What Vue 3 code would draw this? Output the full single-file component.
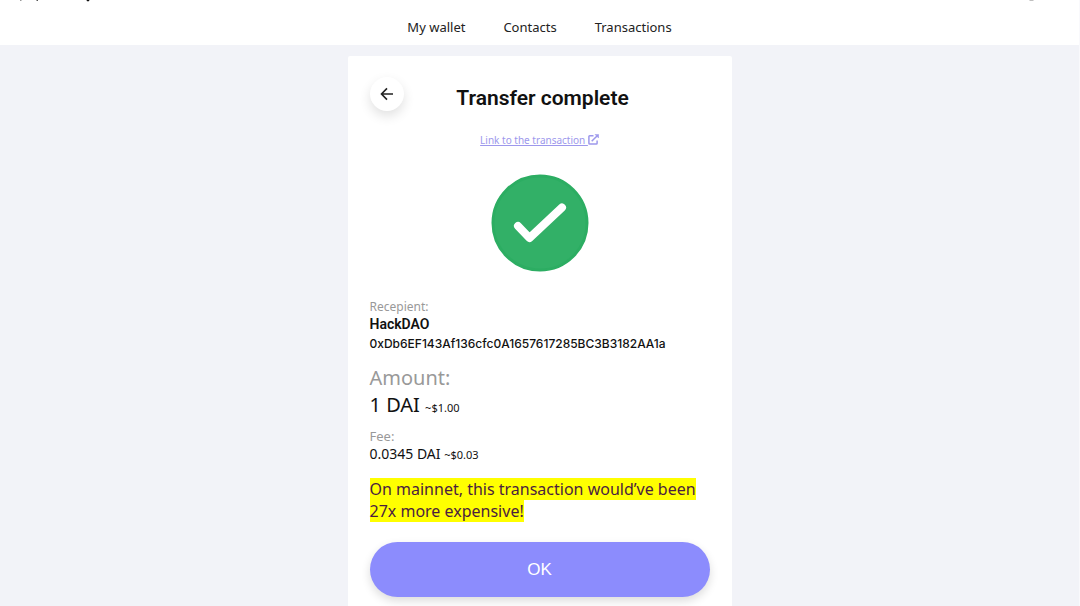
<script setup>
const links = ['My wallet', 'Contacts', 'Transactions']
</script>

<template>
  <div class="page">
    <header class="bar">
      <svg class="edge" width="100" height="2" viewBox="0 0 100 2" aria-hidden="true">
        <path d="M20 0h1.500v1H20z" fill="#999" />
        <path d="M36.500 0h1.500v1h-1.500z" fill="#555" />
        <path d="M86.500 0h3l-.6 1.300h-1.900z" fill="#111" />
      </svg>
      <svg class="edge right" width="8" height="2" viewBox="0 0 8 2" aria-hidden="true">
        <path d="M1 0h5l-1 .8H2z" fill="#aaa" />
      </svg>
      <nav class="nav">
        <a v-for="link in links" :key="link" href="#">{{ link }}</a>
      </nav>
    </header>

    <main class="card">
      <div class="head">
        <button class="back" type="button" aria-label="Back">
          <svg width="14" height="14" viewBox="0 0 14 14" fill="none" stroke="#222" stroke-width="1.600">
            <path d="M13 7H1.800M7 1.400L1.500 7L7 12.600" />
          </svg>
        </button>
        <h1>Transfer complete</h1>
      </div>

      <a class="tx" href="#">Link to the transaction <svg width="11" height="11" viewBox="0 0 11 11" fill="none" stroke="currentColor" stroke-width="1.500" stroke-linejoin="round">
          <path d="M5.500 1.800H1.700Q.9 1.800 .9 2.600V9.300Q.9 10.100 1.700 10.100H8.300Q9.100 10.100 9.100 9.300V6.500M3.700 7.300L9 2" />
          <path d="M7 .4H10.600V4Z" fill="currentColor" stroke-width=".5" />
        </svg></a>

      <svg class="done" width="98" height="98" viewBox="0 0 98 98" fill="none" aria-hidden="true">
        <circle cx="49" cy="49" r="47" fill="#32b067" stroke="#2cad62" stroke-width="3" />
        <path d="M27 52L38.500 64L71 33.500" stroke="#fff" stroke-width="8" stroke-linecap="round" stroke-linejoin="round" />
      </svg>

      <section class="recipient">
        <p class="label">Recepient:</p>
        <p class="name">HackDAO</p>
        <p class="address">0xDb6EF143Af136cfc0A1657617285BC3B3182AA1a</p>
      </section>

      <section class="amount">
        <p class="label">Amount:</p>
        <p>1 DAI <small>~$1.00</small></p>
      </section>

      <section class="fee">
        <p class="label">Fee:</p>
        <p>0.0345 DAI <small>~$0.03</small></p>
      </section>

      <p class="note"><mark>On mainnet, this transaction would’ve been 27x more expensive!</mark></p>

      <button class="ok" type="button">OK</button>
    </main>
  </div>
</template>

<style>
body {
  background: #f2f3f8;
}
</style>

<style scoped>
.page {
  display: flex;
  flex-direction: column;
  min-height: 100vh;
  box-sizing: border-box;
  border-right: 1px solid #f9f9fc;
  color: #111;
  font-family: "Noto Sans", "Open Sans", sans-serif;
}
h1,
p {
  margin: 0;
}
.bar {
  position: relative;
  background: #fff;
  padding: 17px 0 8px;
}
.edge {
  position: absolute;
  top: 0;
  left: 0;
}
.edge.right {
  left: auto;
  right: 43px;
}
.nav {
  display: flex;
  justify-content: center;
  gap: 38px;
}
.nav a {
  color: #222;
  font-size: 13px;
  line-height: 20px;
  text-decoration: none;
}
.card {
  flex: 1;
  display: flex;
  flex-direction: column;
  width: 100%;
  max-width: 384px;
  box-sizing: border-box;
  margin: 11px auto 0;
  padding: 21px 22px 9px;
  background: #fff;
  border-radius: 2px 2px 0 0;
}
.head {
  display: grid;
  grid-template-columns: 34px 1fr 28px;
  align-items: start;
}
.back {
  display: flex;
  align-items: center;
  justify-content: center;
  width: 34px;
  height: 34px;
  padding: 0;
  border: 0;
  border-radius: 50%;
  background: #fff;
  box-shadow: 0 5px 12px rgba(0, 0, 0, 0.12);
}
h1 {
  padding-top: 6px;
  color: #111;
  font-family: Roboto, "Noto Sans", sans-serif;
  font-size: 21px;
  font-weight: 600;
  line-height: 30px;
  text-align: center;
}
.tx {
  align-self: center;
  margin-top: 19px;
  color: #9d98ec;
  font-size: 10px;
  line-height: 16px;
}
.tx svg {
  vertical-align: -1px;
}
.done {
  align-self: center;
  margin-top: 26px;
}
.label {
  color: #999;
}
.recipient {
  margin-top: 27px;
}
.recipient .label {
  font-size: 12px;
  line-height: 16px;
}
.name {
  font-family: Roboto, "Noto Sans", sans-serif;
  font-size: 14px;
  font-weight: 600;
  line-height: 18px;
}
.address {
  font-family: Inter, "Noto Sans", sans-serif;
  font-size: 12px;
  font-weight: 500;
  line-height: 22px;
}
.amount {
  margin-top: 9px;
  font-size: 20px;
  line-height: 27px;
}
small {
  font-size: 11px;
}
.fee {
  margin-top: 6px;
  font-size: 14px;
  line-height: 18px;
}
.fee .label {
  font-size: 13px;
}
.note {
  margin-top: 14px;
  font-size: 16px;
  line-height: 22px;
}
mark {
  background: #ff0;
  color: #4b1d3f;
}
.ok {
  margin-top: 20px;
  height: 55px;
  border: 0;
  border-radius: 28px;
  background: #8c8cfd;
  color: #fff;
  font: 17px "Liberation Sans", Arial, sans-serif;
  box-shadow: 0 4px 10px rgba(0, 0, 0, 0.14);
}
</style>
